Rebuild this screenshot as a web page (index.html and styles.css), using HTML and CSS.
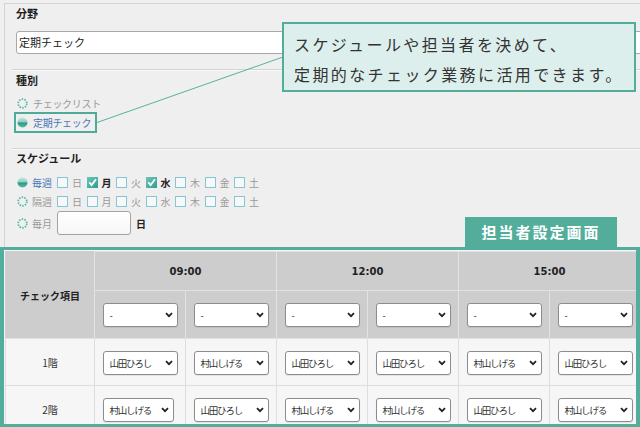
FILE: index.html
```html
<!DOCTYPE html>
<html lang="ja">
<head>
<meta charset="utf-8">
<title>定期チェック</title>
<link rel="stylesheet" href="styles.css">
</head>
<body>
<svg class="defs" width="0" height="0" aria-hidden="true">
  <defs>
    <linearGradient id="ball" x1="0" y1="0" x2="0" y2="1">
      <stop offset="0" stop-color="#c4e8e1"/>
      <stop offset="0.42" stop-color="#8fd0c3"/>
      <stop offset="0.55" stop-color="#2f9a85"/>
      <stop offset="1" stop-color="#55b9a3"/>
    </linearGradient>
    <linearGradient id="cbfill" x1="0" y1="0" x2="1" y2="1">
      <stop offset="0" stop-color="#6cc6b8"/>
      <stop offset="1" stop-color="#2f9e90"/>
    </linearGradient>
  </defs>
</svg>
<div class="page">
  <div class="form">
    <section class="sec sec-first">
      <div class="lbl">分野</div>
      <div class="textbox">定期チェック</div>
    </section>
    <section class="sec sec-kind">
      <div class="lbl">種別</div>
      <div class="radio-row first">
        <svg class="radio" width="11" height="11" viewBox="0 0 11 11"><circle cx="5.5" cy="5.5" r="4.3" fill="none" stroke="#52b69f" stroke-width="1.7" stroke-dasharray="1.5 1.2"/></svg>
        <span class="opt">チェックリスト</span>
      </div>
      <div class="radio-row hl">
        <svg class="radio" width="11" height="11" viewBox="0 0 11 11"><circle cx="5.5" cy="5.5" r="5" fill="url(#ball)"/></svg>
        <span class="opt on">定期チェック</span>
      </div>
    </section>
    <section class="sec sec-sched">
      <div class="lbl">スケジュール</div>
      <div class="sched-row first">
        <svg class="radio" width="11" height="11" viewBox="0 0 11 11"><circle cx="5.5" cy="5.5" r="5" fill="url(#ball)"/></svg>
        <span class="sched-name on">毎週</span>
        <span class="day"><span class="cb"></span><span class="dl">日</span></span>
        <span class="day"><svg class="cbc" width="11" height="11" viewBox="0 0 11 11"><rect x="0" y="0" width="11" height="11" fill="url(#cbfill)"/><polyline points="2.3,5.4 4.6,8 9,2.2" fill="none" stroke="#fff" stroke-width="1.8"/></svg><span class="dl on">月</span></span>
        <span class="day"><span class="cb"></span><span class="dl">火</span></span>
        <span class="day"><svg class="cbc" width="11" height="11" viewBox="0 0 11 11"><rect x="0" y="0" width="11" height="11" fill="url(#cbfill)"/><polyline points="2.3,5.4 4.6,8 9,2.2" fill="none" stroke="#fff" stroke-width="1.8"/></svg><span class="dl on">水</span></span>
        <span class="day"><span class="cb"></span><span class="dl">木</span></span>
        <span class="day"><span class="cb"></span><span class="dl">金</span></span>
        <span class="day"><span class="cb"></span><span class="dl">土</span></span>
      </div>
      <div class="sched-row">
        <svg class="radio" width="11" height="11" viewBox="0 0 11 11"><circle cx="5.5" cy="5.5" r="4.3" fill="none" stroke="#52b69f" stroke-width="1.7" stroke-dasharray="1.5 1.2"/></svg>
        <span class="sched-name">隔週</span>
        <span class="day"><span class="cb"></span><span class="dl">日</span></span>
        <span class="day"><span class="cb"></span><span class="dl">月</span></span>
        <span class="day"><span class="cb"></span><span class="dl">火</span></span>
        <span class="day"><span class="cb"></span><span class="dl">水</span></span>
        <span class="day"><span class="cb"></span><span class="dl">木</span></span>
        <span class="day"><span class="cb"></span><span class="dl">金</span></span>
        <span class="day"><span class="cb"></span><span class="dl">土</span></span>
      </div>
      <div class="sched-row month">
        <svg class="radio" width="11" height="11" viewBox="0 0 11 11"><circle cx="5.5" cy="5.5" r="4.3" fill="none" stroke="#52b69f" stroke-width="1.7" stroke-dasharray="1.5 1.2"/></svg>
        <span class="sched-name">毎月</span>
        <span class="daybox"></span>
        <span class="day-unit">日</span>
      </div>
    </section>
  </div>

  <div class="panel">
    <div class="tab">担当者設定画面</div>
    <div class="table-wrap">
      <table class="grid">
        <colgroup>
          <col class="c-item"><col class="c-sub"><col class="c-sub"><col class="c-sub"><col class="c-sub"><col class="c-sub"><col class="c-sub">
        </colgroup>
        <thead>
          <tr class="h1">
            <th rowspan="2" class="item-head">チェック項目</th>
            <th colspan="2">09:00</th>
            <th colspan="2">12:00</th>
            <th colspan="2">15:00</th>
          </tr>
          <tr class="h2">
            <th><span class="sel"><span>-</span><svg width="8" height="6" viewBox="0 0 8 6"><polyline points="1,1.2 4,4.2 7,1.2" fill="none" stroke="#222" stroke-width="1.8"/></svg></span></th>
            <th><span class="sel"><span>-</span><svg width="8" height="6" viewBox="0 0 8 6"><polyline points="1,1.2 4,4.2 7,1.2" fill="none" stroke="#222" stroke-width="1.8"/></svg></span></th>
            <th><span class="sel"><span>-</span><svg width="8" height="6" viewBox="0 0 8 6"><polyline points="1,1.2 4,4.2 7,1.2" fill="none" stroke="#222" stroke-width="1.8"/></svg></span></th>
            <th><span class="sel"><span>-</span><svg width="8" height="6" viewBox="0 0 8 6"><polyline points="1,1.2 4,4.2 7,1.2" fill="none" stroke="#222" stroke-width="1.8"/></svg></span></th>
            <th><span class="sel"><span>-</span><svg width="8" height="6" viewBox="0 0 8 6"><polyline points="1,1.2 4,4.2 7,1.2" fill="none" stroke="#222" stroke-width="1.8"/></svg></span></th>
            <th><span class="sel"><span>-</span><svg width="8" height="6" viewBox="0 0 8 6"><polyline points="1,1.2 4,4.2 7,1.2" fill="none" stroke="#222" stroke-width="1.8"/></svg></span></th>
          </tr>
        </thead>
        <tbody>
          <tr>
            <td class="item">1階</td>
            <td><span class="sel"><span>山田ひろし</span><svg width="8" height="6" viewBox="0 0 8 6"><polyline points="1,1.2 4,4.2 7,1.2" fill="none" stroke="#222" stroke-width="1.8"/></svg></span></td>
            <td><span class="sel"><span>村山しげる</span><svg width="8" height="6" viewBox="0 0 8 6"><polyline points="1,1.2 4,4.2 7,1.2" fill="none" stroke="#222" stroke-width="1.8"/></svg></span></td>
            <td><span class="sel"><span>山田ひろし</span><svg width="8" height="6" viewBox="0 0 8 6"><polyline points="1,1.2 4,4.2 7,1.2" fill="none" stroke="#222" stroke-width="1.8"/></svg></span></td>
            <td><span class="sel"><span>山田ひろし</span><svg width="8" height="6" viewBox="0 0 8 6"><polyline points="1,1.2 4,4.2 7,1.2" fill="none" stroke="#222" stroke-width="1.8"/></svg></span></td>
            <td><span class="sel"><span>村山しげる</span><svg width="8" height="6" viewBox="0 0 8 6"><polyline points="1,1.2 4,4.2 7,1.2" fill="none" stroke="#222" stroke-width="1.8"/></svg></span></td>
            <td><span class="sel"><span>山田ひろし</span><svg width="8" height="6" viewBox="0 0 8 6"><polyline points="1,1.2 4,4.2 7,1.2" fill="none" stroke="#222" stroke-width="1.8"/></svg></span></td>
          </tr>
          <tr>
            <td class="item">2階</td>
            <td><span class="sel narrow"><span>村山しげる</span><svg width="8" height="6" viewBox="0 0 8 6"><polyline points="1,1.2 4,4.2 7,1.2" fill="none" stroke="#222" stroke-width="1.8"/></svg></span></td>
            <td><span class="sel"><span>山田ひろし</span><svg width="8" height="6" viewBox="0 0 8 6"><polyline points="1,1.2 4,4.2 7,1.2" fill="none" stroke="#222" stroke-width="1.8"/></svg></span></td>
            <td><span class="sel"><span>村山しげる</span><svg width="8" height="6" viewBox="0 0 8 6"><polyline points="1,1.2 4,4.2 7,1.2" fill="none" stroke="#222" stroke-width="1.8"/></svg></span></td>
            <td><span class="sel"><span>村山しげる</span><svg width="8" height="6" viewBox="0 0 8 6"><polyline points="1,1.2 4,4.2 7,1.2" fill="none" stroke="#222" stroke-width="1.8"/></svg></span></td>
            <td><span class="sel"><span>山田ひろし</span><svg width="8" height="6" viewBox="0 0 8 6"><polyline points="1,1.2 4,4.2 7,1.2" fill="none" stroke="#222" stroke-width="1.8"/></svg></span></td>
            <td><span class="sel"><span>村山しげる</span><svg width="8" height="6" viewBox="0 0 8 6"><polyline points="1,1.2 4,4.2 7,1.2" fill="none" stroke="#222" stroke-width="1.8"/></svg></span></td>
          </tr>
        </tbody>
      </table>
    </div>
  </div>

  <svg class="connector" width="640" height="427" viewBox="0 0 640 427" aria-hidden="true">
    <line x1="97" y1="122.5" x2="283" y2="57" stroke="#55b2a0" stroke-width="1"/>
  </svg>
  <div class="callout">スケジュールや担当者を決めて、<br>定期的なチェック業務に活用できます。</div>
</div>
</body>
</html>
```
FILE: styles.css
```css
html, body {
  margin: 0;
  padding: 0;
}
body {
  background: #efefef;
  font-family: "Noto Sans CJK JP", "Noto Sans", sans-serif;
  color: #222;
}
.defs {
  position: absolute;
  width: 0;
  height: 0;
}
.page {
  position: relative;
  width: 640px;
  height: 427px;
  overflow: hidden;
}

/* ---------- form ---------- */
.form {
  margin: 3px 0 0 4px;
  height: 244px;
  box-sizing: border-box;
  border-top: 1px solid #d3d3d3;
  border-left: 1px solid #d3d3d3;
  padding-left: 7px;
}
.sec {
  padding-left: 4px;
}
.sec + .sec {
  border-top: 1px solid #d4d4d4;
  box-shadow: inset 0 1px 0 #f9f9f9;
}
.sec-first {
  padding-top: 1px;
  padding-bottom: 15px;
}
.sec-kind {
  padding-top: 2px;
  padding-bottom: 15px;
}
.sec-sched {
  padding-top: 1px;
}
.lbl {
  font-size: 11px;
  font-weight: bold;
  line-height: 16px;
  color: #1e1e1e;
}
.textbox {
  margin-top: 10px;
  width: 640px;
  height: 23px;
  box-sizing: border-box;
  border: 1px solid #a9a9a9;
  border-radius: 3px;
  background: #fff;
  font-size: 11px;
  line-height: 21px;
  padding-left: 2px;
  color: #222;
}
.radio-row {
  display: flex;
  align-items: center;
  height: 17px;
  gap: 5px;
  padding-left: 1px;
}
.radio-row.first {
  margin-top: 7px;
}
.radio {
  flex: none;
  display: block;
}
.opt {
  font-size: 10px;
  color: #999;
  letter-spacing: -0.3px;
}
.opt.on {
  color: #4877b6;
}
.radio-row.hl {
  width: 83px;
  height: 21px;
  box-sizing: border-box;
  margin-left: -2px;
  border: 2px solid #4fab98;
  padding-left: 1px;
}

.sched-row {
  display: flex;
  align-items: center;
  height: 19px;
  padding-left: 1px;
}
.sched-row.first {
  margin-top: 7px;
}
.sched-row.month {
  height: 24px;
}
.sched-name {
  width: 25px;
  margin-left: 4px;
  font-size: 10px;
  color: #999;
}
.sched-name.on {
  color: #4877b6;
}
.day {
  display: flex;
  align-items: center;
  width: 29.5px;
  flex: none;
}
.cb {
  width: 11px;
  height: 11px;
  box-sizing: border-box;
  border: 1px solid #86c5d6;
  background: #f6f8f9;
  flex: none;
}
.cbc {
  display: block;
  flex: none;
}
.dl {
  margin-left: 4px;
  font-size: 10px;
  color: #9a9a9a;
}
.dl.on {
  color: #222;
  font-weight: bold;
}
.daybox {
  width: 74px;
  height: 24px;
  box-sizing: border-box;
  border: 1px solid #a3a3a3;
  border-radius: 3px;
  background: linear-gradient(#ffffff, #f6f6f6);
}
.day-unit {
  margin-left: 5px;
  font-size: 10px;
  font-weight: bold;
  color: #222;
}

/* ---------- panel ---------- */
.panel {
  position: relative;
  height: 180px;
  box-sizing: border-box;
  border: 3px solid #52ad9a;
  border-left-width: 4px;
  border-right-width: 4px;
  background: #f5f5f5;
}
.tab {
  position: absolute;
  right: 19px;
  top: -33px;
  width: 152px;
  height: 30px;
  background: #52ad9a;
  color: #fff;
  font-size: 15px;
  font-weight: bold;
  letter-spacing: 2px;
  line-height: 30px;
  text-align: center;
}
.table-wrap {
  height: 100%;
  overflow: hidden;
  padding: 1px 0 0 1px;
  box-sizing: border-box;
}
.grid {
  table-layout: fixed;
  width: 635px;
  border-collapse: collapse;
}
.c-item {
  width: 89px;
}
.c-sub {
  width: 91px;
}
.grid th {
  background: #cdcdcd;
  border: 1px solid #e2e2e2;
  font-family: "DejaVu Sans", "Noto Sans CJK JP", sans-serif;
  font-size: 10px;
  font-weight: bold;
  color: #222;
  text-align: center;
  padding: 0;
}
.grid th.item-head {
  font-family: "Noto Sans CJK JP", sans-serif;
  border-top-color: #cdcdcd;
  border-left-color: #cdcdcd;
}
.grid tr.h1 {
  height: 39px;
}
.grid tr.h2 {
  height: 48px;
}
.grid td {
  background: #f6f6f6;
  border: 1px solid #dedede;
  text-align: center;
  padding: 0;
  height: 46px;
}
.grid td.item {
  font-size: 10px;
  color: #333;
}
.sel {
  display: inline-flex;
  vertical-align: middle;
  align-items: center;
  justify-content: space-between;
  width: 75px;
  height: 24px;
  box-sizing: border-box;
  border: 1px solid #8d8d8d;
  border-radius: 3px;
  background: #fff;
  box-shadow: 0 1px 1px rgba(0, 0, 0, 0.08);
  padding: 0 4px 0 6px;
  font-family: "Noto Sans CJK JP", sans-serif;
  font-size: 9.5px;
  font-weight: normal;
  letter-spacing: -1.2px;
  color: #333;
  text-align: left;
}
.sel svg {
  display: block;
  flex: none;
}
.sel.narrow {
  width: 71px;
  margin-right: 4px;
}

/* ---------- callout ---------- */
.connector {
  position: absolute;
  left: 0;
  top: 0;
  pointer-events: none;
}
.callout {
  position: absolute;
  left: 282px;
  top: 22px;
  width: 354px;
  height: 70px;
  box-sizing: border-box;
  border: 2px solid #53ad9a;
  background: #ddefec;
  padding: 5px 0 0 10px;
  font-size: 16px;
  line-height: 30px;
  letter-spacing: 2.4px;
  color: #333;
  white-space: nowrap;
}
```
